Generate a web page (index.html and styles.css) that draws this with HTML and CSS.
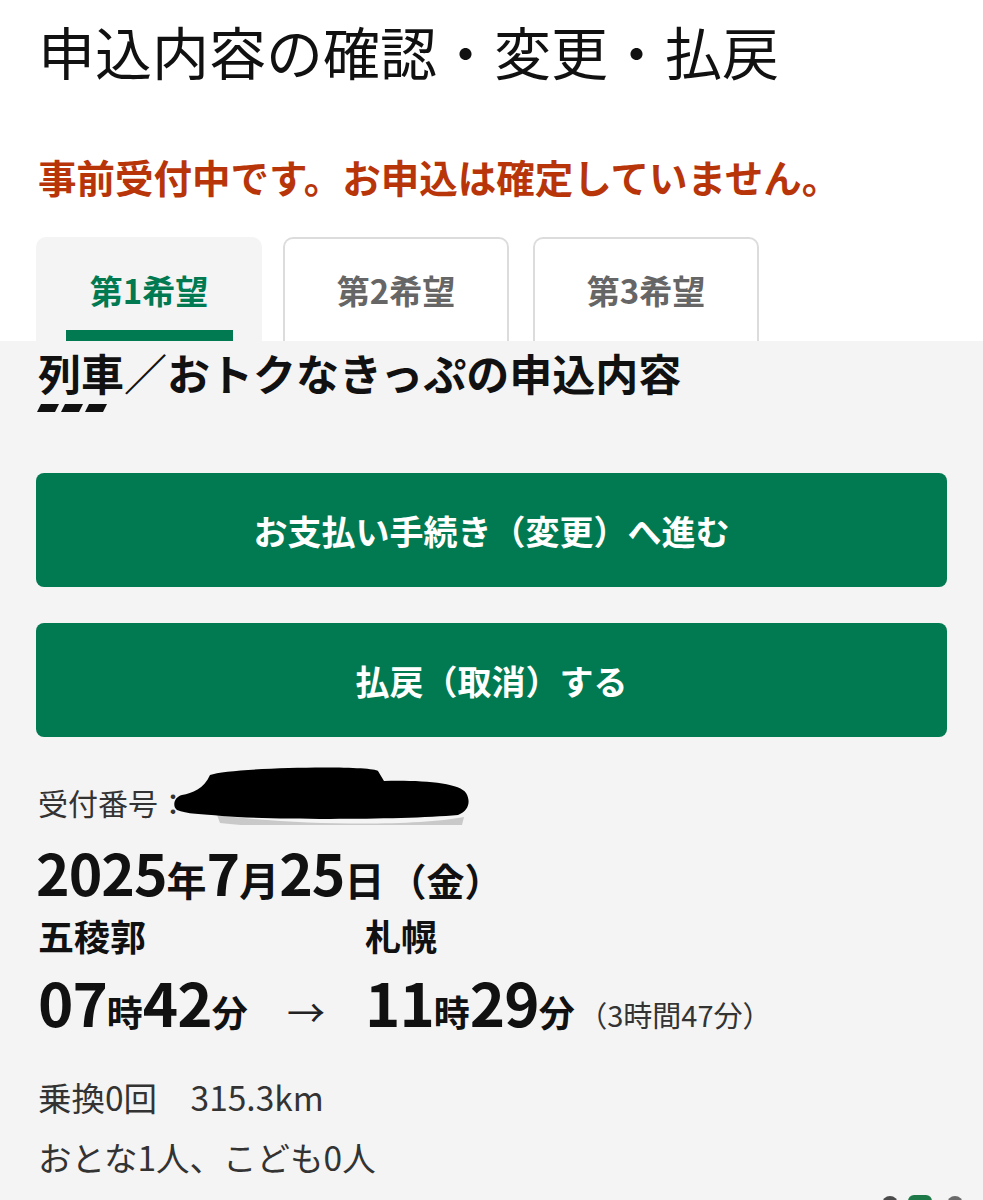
FILE: index.html
```html
<!DOCTYPE html>
<html lang="ja">
<head>
    <meta charset="UTF-8">
    <meta name="viewport" content="width=device-width, initial-scale=1.0">
    <title>申込内容の確認・変更・払戻</title>
    <link rel="stylesheet" href="styles.css">
</head>
<body>
    <div class="header">
        <h1 class="page-title">申込内容の確認・変更・払戻</h1>
        <p class="notice">事前受付中です。お申込は確定していません。</p>

        <div class="tabs">
            <div class="tab active">
                <span class="tab-label">第1希望</span>
                <span class="tab-bar"></span>
            </div>
            <div class="tab">
                <span class="tab-label">第2希望</span>
            </div>
            <div class="tab">
                <span class="tab-label">第3希望</span>
            </div>
        </div>
    </div>

    <div class="panel">
        <h2 class="section-title">列車／おトクなきっぷの申込内容</h2>
        <svg class="dashes" width="70" height="8" viewBox="0 0 70 8">
            <polygon points="4,0 22,0 18,8 0,8" />
            <polygon points="28,0 46,0 42,8 24,8" />
            <polygon points="52,0 70,0 66,8 48,8" />
        </svg>

        <div class="actions">
            <button class="btn">お支払い手続き（変更）へ進む</button>
            <button class="btn">払戻（取消）する</button>
        </div>

        <div class="receipt">
            <span class="receipt-label">受付番号：</span>
            <!-- 受付番号は塗りつぶし -->
            <svg class="redact" width="300" height="60" viewBox="0 0 300 60">
                <path class="redact-shadow" d="M45 50 C120 60, 240 62, 292 52 L290 60 C200 66, 100 64, 48 58 Z" />
                <path d="M38 10 C60 2, 200 0, 206 6 L212 16 C250 15, 288 18, 294 28 C299 36, 297 46, 286 50 C230 55, 100 55, 50 51 C30 49, 14 49, 5 45 C0 41, 2 32, 10 30 C20 28, 32 24, 38 10 Z" />
            </svg>
        </div>

        <div class="date">
            <span class="num">2025</span><span class="unit">年</span><span class="num">7</span><span class="unit">月</span><span class="num">25</span><span class="unit">日</span><span class="week">（金）</span>
        </div>

        <div class="route">
            <div class="station">五稜郭</div>
            <div class="station">札幌</div>
            <div class="time dep">
                <span><span class="num">07</span><span class="unit">時</span><span class="num">42</span><span class="unit">分</span></span>
                <span class="arrow">→</span>
            </div>
            <div class="time">
                <span class="num">11</span><span class="unit">時</span><span class="num">29</span><span class="unit">分</span>
                <span class="duration">（3時間47分）</span>
            </div>
        </div>

        <p class="info">乗換0回　315.3km</p>
        <p class="info">おとな1人、こども0人</p>
    </div>

    <svg class="float-icons" width="90" height="20" viewBox="0 0 90 20">
        <circle cx="12" cy="11" r="8" fill="#4a4a4a" />
        <rect x="30" y="2" width="24" height="20" rx="6" fill="#1d7a48" />
        <circle cx="77" cy="11" r="8" fill="#6a6a6a" />
    </svg>
</body>
</html>
```

FILE: styles.css
```css
:root {
    --green: #017a51;
    --panel-bg: #f4f4f4;
    --text-color: #111;
    --sub-text: #333;
    --tab-border: #dcdcdc;
}

body {
    margin: 0;
    font-family: "Noto Sans CJK JP", "Noto Sans", sans-serif;
    background-color: #fff;
    color: var(--text-color);
    position: relative;
    min-height: 1200px;
    overflow: hidden;
}

.header {
    padding: 11px 36px 0 36px;
}

.page-title {
    margin: 0 0 0 2px;
    font-size: 57px;
    font-weight: 400;
    line-height: 78px;
}

.notice {
    margin: 60px 0 0 2px;
    font-size: 38.5px;
    font-weight: 700;
    line-height: 54px;
    color: #b8350a;
}

.tabs {
    display: flex;
    gap: 21px;
    margin-top: 34px;
}

.tab {
    width: 226px;
    height: 104px;
    box-sizing: border-box;
    display: flex;
    flex-direction: column;
    align-items: center;
    padding-top: 29px;
    border: 2px solid var(--tab-border);
    border-bottom: none;
    border-radius: 10px 10px 0 0;
    background-color: #fff;
}

.tab:nth-child(3) {
    margin-left: 3px;
}

.tab.active {
    border-color: var(--panel-bg);
    background-color: var(--panel-bg);
}

.tab-label {
    font-size: 33px;
    font-weight: 700;
    line-height: 44px;
    color: #666;
}

.tab.active .tab-label {
    color: var(--green);
}

.tab-bar {
    display: block;
    width: 167px;
    height: 11px;
    margin-top: auto;
    background-color: var(--green);
}

.panel {
    background-color: var(--panel-bg);
    padding: 3px 36px 40px 36px;
    min-height: 900px;
}

.section-title {
    margin: 0 0 0 2px;
    font-size: 43px;
    font-weight: 700;
    line-height: 56px;
}

.dashes {
    display: block;
    margin: 4px 0 0 1px;
    fill: #111;
}

.actions {
    display: flex;
    flex-direction: column;
    gap: 36px;
    margin-top: 61px;
}

.btn {
    height: 114px;
    border: none;
    border-radius: 8px;
    background-color: var(--green);
    color: #fff;
    font-family: inherit;
    font-size: 34px;
    font-weight: 700;
    cursor: pointer;
}

.receipt {
    display: flex;
    align-items: flex-end;
    margin-top: 26px;
    height: 60px;
}

.receipt-label {
    font-size: 30px;
    line-height: 42px;
    color: var(--sub-text);
    margin-left: 2px;
    width: 134px;
    white-space: nowrap;
}

.redact {
    display: block;
    fill: #000;
    margin-bottom: -2px;
}

.redact-shadow {
    fill: #c9c9c9;
}

.date {
    margin-top: 16px;
    line-height: 64px;
    font-weight: 700;
}

.num {
    font-size: 57px;
    font-weight: 700;
    letter-spacing: -1px;
}

.unit {
    font-size: 40px;
    font-weight: 700;
}

.week {
    font-size: 38px;
    font-weight: 700;
    margin-left: 4px;
}

.route {
    display: grid;
    grid-template-columns: 327px 1fr;
    margin-top: -11px;
}

.station {
    font-size: 36px;
    font-weight: 700;
    line-height: 50px;
    margin-left: 2px;
}

.time {
    line-height: 70px;
    margin-top: 6px;
    margin-left: 2px;
    white-space: nowrap;
}

.time .num {
    font-size: 60px;
}

.time .unit {
    font-size: 36px;
}

.time.dep {
    display: flex;
    justify-content: space-between;
    align-items: baseline;
    padding-right: 38px;
}

.arrow {
    font-size: 38px;
    font-weight: 400;
    color: #222;
}

.duration {
    font-size: 29px;
    font-weight: 400;
    color: var(--sub-text);
}

.info {
    margin: 0 0 0 2px;
    font-size: 33.5px;
    line-height: 60px;
    color: var(--sub-text);
}

.route + .info {
    margin-top: 12px;
}

.float-icons {
    position: absolute;
    left: 878px;
    top: 1193px;
}
```
